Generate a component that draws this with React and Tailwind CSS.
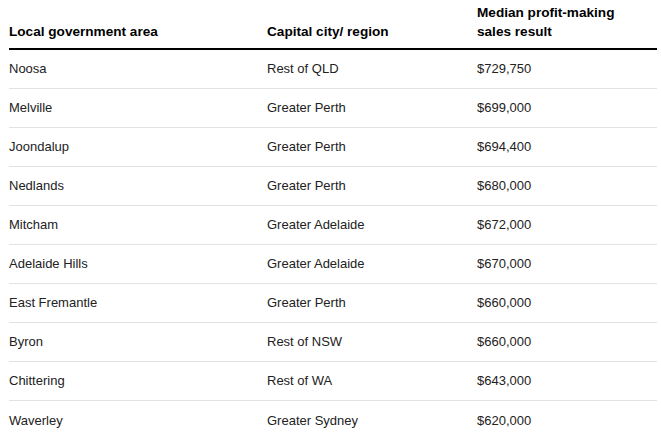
import React from 'react';

const rows = [
    ['Noosa', 'Rest of QLD', '$729,750'],
    ['Melville', 'Greater Perth', '$699,000'],
    ['Joondalup', 'Greater Perth', '$694,400'],
    ['Nedlands', 'Greater Perth', '$680,000'],
    ['Mitcham', 'Greater Adelaide', '$672,000'],
    ['Adelaide Hills', 'Greater Adelaide', '$670,000'],
    ['East Fremantle', 'Greater Perth', '$660,000'],
    ['Byron', 'Rest of NSW', '$660,000'],
    ['Chittering', 'Rest of WA', '$643,000'],
    ['Waverley', 'Greater Sydney', '$620,000'],
];

export default function App() {
    return (
        <div className="bg-white w-[661px] h-[445px] overflow-hidden font-['Liberation_Sans',Arial,sans-serif]">
            <div className="ml-[9px] w-[648px]">
                {/* Шапка таблицы */}
                <div className="grid grid-cols-[258px_210px_180px] items-end border-b-2 border-black pt-[3px] pb-[7px] text-[13.6px] leading-[19px] font-bold text-black">
                    <div>Local government area</div>
                    <div>Capital city/ region</div>
                    <div>Median profit-making<br />sales result</div>
                </div>

                {/* Строки */}
                {rows.map((row, i) => (
                    <div
                        key={row[0]}
                        className={`grid grid-cols-[258px_210px_180px] items-center h-[39px] text-[13px] text-[#222] ${i < rows.length - 1 ? 'border-b border-[#e2e2e2]' : ''}`}
                    >
                        <div>{row[0]}</div>
                        <div>{row[1]}</div>
                        <div>{row[2]}</div>
                    </div>
                ))}
            </div>
        </div>
    );
}
